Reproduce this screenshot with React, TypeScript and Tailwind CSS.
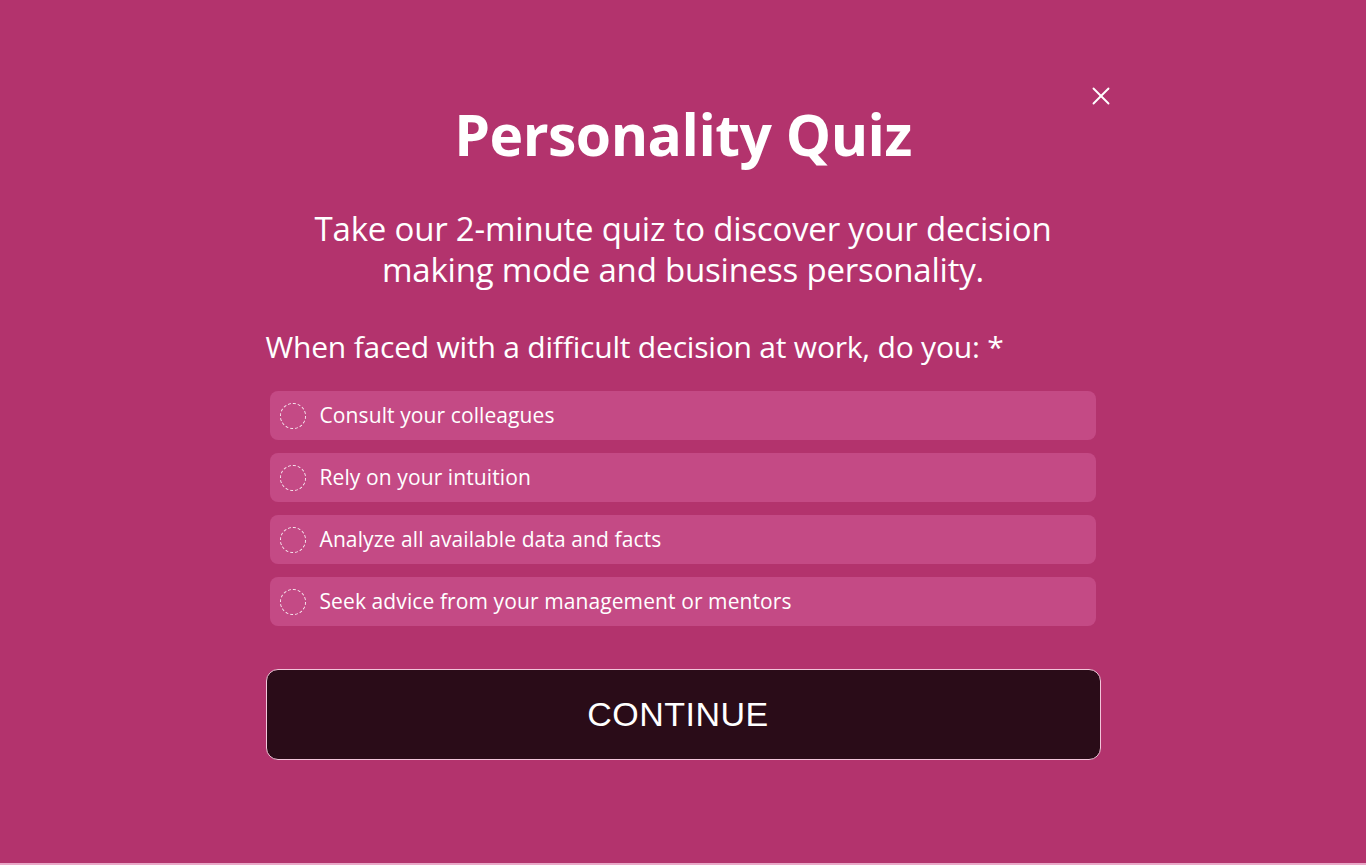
import { X } from 'lucide-react';

const options = [
  'Consult your colleagues',
  'Rely on your intuition',
  'Analyze all available data and facts',
  'Seek advice from your management or mentors',
];

export default function App() {
  return (
    <div className="min-h-[865px] w-full bg-[#b3336d] font-['Open_Sans',sans-serif] text-white border-b-2 border-[#e9a9c8]">
      <div className="relative mx-auto w-[835px] pt-[94px] flex flex-col">
        {/* kapatma */}
        <button className="absolute right-[-15px] top-[81px] text-white">
          <X className="h-[30px] w-[30px]" strokeWidth={1.5} />
        </button>

        <h1 className="text-center text-[57px] font-bold leading-[80px] tracking-[-0.5px]">
          Personality Quiz
        </h1>

        <div className="mt-[34px] flex flex-col items-center text-[33px] leading-[41px] tracking-[-0.2px]">
          <p>Take our 2-minute quiz to discover your decision</p>
          <p>making mode and business personality.</p>
        </div>

        <p className="mt-[37px] text-[30px] leading-[40px] tracking-[-0.2px]">
          When faced with a difficult decision at work, do you: *
        </p>

        <div className="mt-[24px] flex flex-col gap-[13px] pl-[4px] pr-[5px]">
          {options.map((o) => (
            <label
              key={o}
              className="flex h-[49px] items-center gap-[14px] rounded-[8px] bg-[#c44a85] px-[10px]"
            >
              <span className="h-[26px] w-[26px] rounded-full border-[1.5px] border-dashed border-white/90" />
              <span className="text-[21px] tracking-[0.1px]">{o}</span>
            </label>
          ))}
        </div>

        <button className="mt-[43px] h-[91px] w-full rounded-[12px] border border-[#f2c6da] bg-[#2a0c18] font-['Liberation_Sans',sans-serif] text-[34px] tracking-[0.5px] text-white">
          <span className="pr-[10px]">CONTINUE</span>
        </button>
      </div>
    </div>
  );
}
